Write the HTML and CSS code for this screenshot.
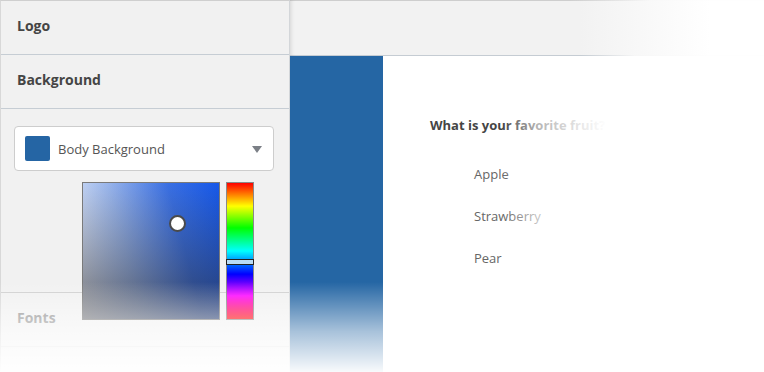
FILE: index.html
```html
<!DOCTYPE html>
<html lang="en">
<head>
<meta charset="utf-8">
<title>Theme editor</title>
<link rel="stylesheet" href="styles.css">
</head>
<body>
<div class="stage">
  <aside class="sidebar">
    <div class="section-head">Logo</div>
    <div class="section-head">Background</div>
    <div class="section-body">
      <div class="select">
        <span class="swatch"></span>
        <span class="select-label">Body Background</span>
        <span class="caret"></span>
      </div>
      <div class="picker">
        <div class="sv">
          <span class="sv-handle"></span>
        </div>
        <div class="hue">
          <span class="hue-marker"></span>
        </div>
      </div>
    </div>
    <div class="section-head fonts">Fonts</div>
    <div class="sidebar-rest"></div>
  </aside>
  <main class="preview">
    <div class="preview-top"></div>
    <div class="preview-body">
      <div class="brand-col"></div>
      <div class="survey">
        <div class="question">What is your favorite fruit?</div>
        <ul class="options">
          <li>Apple</li>
          <li>Strawberry</li>
          <li>Pear</li>
        </ul>
      </div>
      <div class="fade-right"></div>
    </div>
  </main>
  <div class="fade-bottom"></div>
</div>
</body>
</html>
```

FILE: styles.css
```css
* { box-sizing: border-box; }
html, body { margin: 0; padding: 0; background: #fff; }
body { font-family: "Open Sans", "Liberation Sans", sans-serif; }

.stage {
  position: relative;
  width: 764px;
  height: 372px;
  overflow: hidden;
  display: flex;
  background: #fff;
}

.sidebar {
  width: 290px;
  flex: none;
  display: flex;
  flex-direction: column;
  background: #f1f1f1;
  border-left: 1px solid #d8d8d8;
  border-right: 1px solid #d3d6d9;
  border-top: 1px solid #cfcfcf;
}

.section-head {
  height: 54px;
  padding: 15px 16px 0;
  line-height: 20px;
  font-size: 14px;
  font-weight: 700;
  color: #454545;
  border-bottom: 1px solid #c6cdd4;
}

.section-body {
  position: relative;
  height: 184px;
  padding: 17px 15px 0 13px;
  border-bottom: 1px solid #cfcfcf;
}

.select {
  height: 45px;
  display: flex;
  align-items: center;
  padding: 0 11px 0 10px;
  background: #fff;
  border: 1px solid #cdcdcd;
  border-radius: 4px;
}

.swatch {
  width: 25px;
  height: 25px;
  border-radius: 2px;
  background: #2565a4;
  flex: none;
}

.select-label {
  flex: 1;
  margin-left: 8px;
  font-size: 13px;
  color: #555;
}

.caret {
  width: 0;
  height: 0;
  border-left: 5px solid transparent;
  border-right: 5px solid transparent;
  border-top: 7px solid #7b7f86;
  margin-top: 1px;
}

.picker {
  position: absolute;
  left: 81px;
  top: 73px;
  display: flex;
  gap: 6px;
}

.sv {
  position: relative;
  width: 138px;
  height: 138px;
  border: 1px solid #7a7a7a;
  background:
    linear-gradient(to bottom, rgba(0,0,0,0) 0%, rgba(35,35,40,0.62) 100%),
    linear-gradient(75deg, #f2f6fd 0%, #9ab6ec 35%, #3a70e4 70%, #1658ea 100%);
}

.sv-handle {
  position: absolute;
  left: 86px;
  top: 32px;
  width: 17px;
  height: 17px;
  border-radius: 50%;
  background: #fff;
  border: 2px solid #4a4a4a;
}

.hue {
  position: relative;
  width: 28px;
  height: 138px;
  border: 1px solid #8a8a8a;
  background: linear-gradient(to bottom,
    #ff0000 0%, #ffff00 17%, #00ff00 33%, #00ffff 50%,
    #0000ff 67%, #ff00ff 83%, #ff0000 100%);
}

.hue-marker {
  position: absolute;
  left: -1px;
  right: -1px;
  top: 76px;
  height: 6px;
  background: #b9dcf6;
  border: 1px solid #222;
}

.fonts {
  padding-top: 15px;
  color: #8e8e8e;
  border-bottom-color: #e2e2e2;
}

.sidebar-rest { flex: 1; }

.preview {
  flex: 1;
  display: flex;
  flex-direction: column;
  background: #fff;
}

.preview-top {
  height: 56px;
  flex: none;
  background:
    linear-gradient(to right, #cfcfcf 0, #cfcfcf 280px, rgba(207,207,207,0) 360px) top left / 100% 1px no-repeat,
    linear-gradient(to right, #c6cdd4 0, #c6cdd4 290px, rgba(198,205,212,0) 345px) bottom left / 100% 1px no-repeat,
    linear-gradient(to right, #f2f2f2 0, #f2f2f2 290px, #fff 420px);
  box-shadow: inset 4px 0 4px -3px rgba(0,0,0,0.12);
}

.preview-body {
  position: relative;
  flex: 1;
  display: flex;
}

.brand-col {
  width: 93px;
  flex: none;
  background: #2566a4;
}

.survey {
  padding: 59px 0 0 47px;
}

.question {
  font-size: 13px;
  line-height: 20px;
  font-weight: 700;
  color: #454545;
}

.options {
  list-style: none;
  margin: 18px 0 0;
  padding: 0 0 0 44px;
}

.options li {
  font-size: 13px;
  line-height: 42px;
  color: #666;
}

.fade-right {
  position: absolute;
  top: 0;
  bottom: 0;
  left: 212px;
  right: 0;
  pointer-events: none;
  background: linear-gradient(to right, rgba(255,255,255,0) 0px, rgba(255,255,255,0.6) 35px, rgba(255,255,255,0.88) 80px, #fff 105px);
}

.fade-bottom {
  position: absolute;
  left: 0;
  right: 0;
  bottom: 0;
  height: 90px;
  pointer-events: none;
  background: linear-gradient(to bottom, rgba(255,255,255,0) 0%, rgba(255,255,255,0.6) 55%, rgba(255,255,255,0.97) 100%);
}
```
